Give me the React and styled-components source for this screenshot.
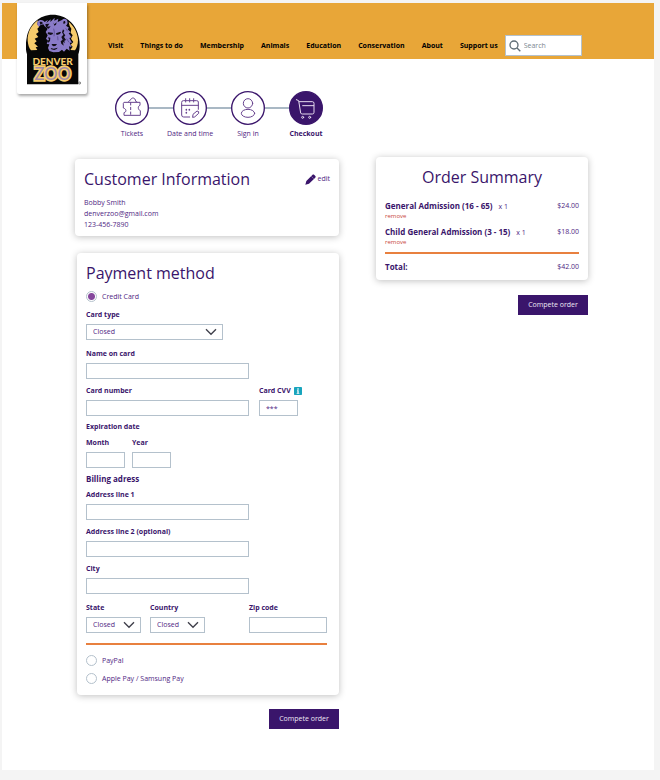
import React, { useState } from "react";
import styled, { createGlobalStyle } from "styled-components";

const purple = "#3a156b";
const textPurple = "#4f2683";
const border = "#b4c1cc";
const gold = "#e8a638";
const orange = "#e8803f";

const GlobalStyle = createGlobalStyle`
* {
	box-sizing: border-box;
}
body {
	margin: 0;
	padding: 3px 6px 10px 2px;
	background: #f4f4f4;
	color: ${textPurple};
	font-family: "Open Sans", sans-serif;
	font-size: 7px;
	line-height: 10px;
}
input, select, button {
	font: inherit;
	color: inherit;
}
a {
	color: inherit;
	text-decoration: none;
}
h1, h2, h3, p, ol {
	margin: 0;
	padding: 0;
}
`

const Page = styled.div`
background: white;
padding-bottom: 41px;
`

const Header = styled.header`
position: relative;
display: flex;
align-items: flex-end;
height: 56px;
padding: 0 72px 3px 106px;
background: ${gold};
`

const LogoCard = styled.a`
position: absolute;
top: 0;
left: 15px;
padding: 11px 6px 9px 9px;
background: white;
border-radius: 0 0 2px 2px;
box-shadow: 1px 2px 3px rgba(0, 0, 0, 0.35);

svg {
	display: block;
}
`

const Nav = styled.nav`
display: flex;
align-items: center;
gap: 17px;
height: 21px;
color: black;
font-weight: 700;
white-space: nowrap;
`

const SearchBox = styled.label`
display: flex;
align-items: center;
gap: 3px;
width: 77px;
height: 21px;
margin-left: 7px;
padding: 0 3px;
background: white;
border: 1px solid ${border};

svg {
	flex: none;
}
input {
	width: 100%;
	min-width: 0;
	padding: 0;
	border: 0;
	outline: 0;
	background: none;
}
input::placeholder {
	color: #7c8790;
	opacity: 1;
}
`

const Steps = styled.ol`
display: flex;
padding: 32px 0 18px 101px;
list-style: none;
`

const Step = styled.li`
display: flex;
flex-direction: column;
align-items: center;
gap: 4px;
width: 58px;
white-space: nowrap;
color: ${props => (props.$active ? purple : textPurple)};
font-weight: ${props => (props.$active ? 700 : 400)};
`

const Track = styled.div`
display: flex;
align-items: center;
width: 100%;

svg {
	display: block;
}
`

const Line = styled.span`
flex: 1;
height: 2px;
background: ${props => (props.$hidden ? "transparent" : "#a9b8c4")};
`

const Main = styled.main`
display: grid;
grid-template-columns: 264fr 212fr;
column-gap: 37px;
align-items: start;
padding: 0 66px 0 73px;
`

const Column = styled.div`
display: flex;
flex-direction: column;
padding-top: ${props => props.$top || "0"};
`

const Card = styled.section`
padding: ${props => props.$pad || "8px 9px"};
background: white;
border-radius: 4px;
box-shadow: 0 1px 7px rgba(0, 0, 0, 0.25);
`

const Title = styled.h2`
color: ${purple};
font-size: 16px;
line-height: 24px;
font-weight: 400;
text-align: ${props => props.$align || "left"};
`

const CardHead = styled.div`
display: flex;
align-items: center;
justify-content: space-between;
margin-bottom: 6px;
`

const EditLink = styled.a`
display: flex;
align-items: center;
gap: 2px;
`

const Contact = styled.p`
line-height: 11px;
`

const Form = styled.form`
display: flex;
flex-direction: column;
padding-top: 17px;
padding-left: 2px;
`

const RadioRow = styled.label`
display: flex;
align-items: center;
gap: 5px;
height: 11px;
margin: ${props => props.$margin || "0"};
`

const Radio = styled.input`
appearance: none;
width: 11px;
height: 11px;
margin: 0;
border: 1px solid ${border};
border-radius: 50%;

&:checked {
	background: radial-gradient(circle, #85479c 3px, white 4px);
}
`

const Row = styled.div`
display: flex;
align-items: flex-end;
gap: ${props => props.$gap || "10px"};
margin-top: ${props => props.$top || "7px"};
`

const Field = styled.div`
display: flex;
flex-direction: column;
gap: 4px;
width: ${props => props.$width || "163px"};
margin-left: ${props => (props.$end ? "auto" : "0")};
`

const Label = styled.label`
display: flex;
align-items: center;
gap: 3px;
height: 10px;
color: ${purple};
font-weight: 700;
white-space: nowrap;

svg {
	flex: none;
}
`

const GroupTitle = styled.h3`
margin-top: 6px;
color: ${purple};
font-size: ${props => (props.$large ? "8px" : "7px")};
font-weight: 700;
`

const Input = styled.input`
width: 100%;
height: 16px;
padding: 0 6px;
background: white;
border: 1px solid ${border};
border-radius: 0;

&::placeholder {
	color: ${textPurple};
	opacity: 1;
}
`

const SelectWrap = styled.div`
position: relative;

svg {
	position: absolute;
	top: 4px;
	right: 6px;
	pointer-events: none;
}
`

const Select = styled.select`
appearance: none;
display: block;
width: 100%;
height: 16px;
padding: 0 6px;
background: white;
border: 1px solid ${border};
border-radius: 0;
`

const Divider = styled.hr`
width: 100%;
height: 2px;
margin: ${props => props.$margin};
border: 0;
background: ${orange};
`

const OrderButton = styled.button`
align-self: flex-end;
width: 70px;
height: 20px;
margin-top: ${props => props.$top};
padding: 0;
border: 0;
background: ${purple};
color: #eee8f4;
cursor: pointer;
`

const Item = styled.div`
display: flex;
justify-content: space-between;
margin-top: ${props => props.$top || "0"};
`

const ItemName = styled.strong`
margin-right: 6px;
color: ${purple};
font-size: 8px;
font-weight: 700;
`

const Remove = styled.button`
display: block;
padding: 0;
border: 0;
background: none;
color: #c8483c;
font-size: 6px;
line-height: 8px;
cursor: pointer;
`

const Logo = () => (
	<svg width="55" height="71" viewBox="78 42 165 213" role="img" aria-label="Denver Zoo">
		<path d="M81 253V163C76 148 77 128 80 114C87 72 119 44 158 44C198 44 230 72 237 114C240 130 240 148 235 163V253Z" fill="#070707" />
		<g transform="translate(72 36)">
			<path d="M42 25C22 38 10 62 11 86C12 98 15 108 21 115L40 114L35 106L42 104L31 94L38 88L32 80L43 75L36 66L44 60L40 50L46 44L40 37Z" fill="#f7cc6c" />
			<path d="M134 29C150 42 161 62 162 84C162 98 158 108 153 115L139 114L146 104L140 98L148 90L141 80L146 70L140 62L142 50L137 42Z" fill="#f7cc6c" />
			<path d="M44 44C38 38 38 28 46 25C52 22 59 25 62 30L72 23L67 33L80 22L79 30L92 17L91 26L103 20L101 30L114 24C119 18 128 20 130 27C132 34 130 38 126 41L135 47L131 52L140 61L134 64L143 76L136 78L144 92L137 92L143 106L135 103L137 116L128 110L120 119L114 113L105 120L88 121L76 117L72 108L76 97L68 96L72 86L66 80L71 70L65 60L71 50L62 43L58 37L50 39Z" fill="#8a7bc8" />
			<g fill="#120f18">
				<path d="M47 31C50 28 55 30 57 34L49 38ZM118 29C120 25 125 27 124 32C123 35 119 36 118 35Z" />
				<path d="M64 36L76 35L70 44L80 43L74 50L66 46ZM88 31L91 37L98 31L96 38L91 41Z" />
				<path d="M72 61L86 62L87 66L80 69L71 66ZM96 64L109 59L111 62L106 67L98 69Z" />
				<path d="M72 76L79 77L78 87L73 92L70 88L75 83Z" />
				<path d="M83 96L99 96L95 101L89 103L84 100ZM80 108L89 110L101 107L98 111L91 114L82 112Z" />
				<path d="M117 52L121 56L118 62L124 70L120 75L126 84L121 86L122 94L117 89L119 101L112 95L110 88L116 83L112 75L118 68L114 61Z" />
			</g>
			<path d="M89 50L91 60L90 73M101 73L102 85M125 49L131 58M128 80L135 91" fill="none" stroke="#4f4382" strokeWidth="2" />
		</g>
		<text x="158" y="194" textAnchor="middle" fontFamily="Lato, sans-serif" fontWeight="900" fontSize="30" fill="#f7cc6c">DENVER</text>
		<text x="158" y="239" textAnchor="middle" fontFamily="Lato, sans-serif" fontWeight="400" fontSize="50" fill="#a08aa8" stroke="#f7cc6c" strokeWidth="10" paintOrder="stroke">ZOO</text>
		<circle cx="239" cy="249" r="3" fill="none" stroke="#444" strokeWidth="2" />
	</svg>
);

const SearchIcon = () => (
	<svg width="12" height="12" viewBox="0 0 36 36" fill="none" stroke="#5f6d76" strokeWidth="4">
		<circle cx="15" cy="15" r="12" />
		<path d="M24 24L34 34" />
	</svg>
);

const StepIcon = ({ active, children }) => (
	<svg width="34" height="34" viewBox="0 0 102 102" fill="none">
		<circle cx="51" cy="51" r="49" fill={active ? purple : "white"} stroke={purple} strokeWidth="4" />
		<g stroke={active ? "#e6dcef" : "#68438f"} strokeWidth="3" strokeLinecap="round" strokeLinejoin="round">
			{children}
		</g>
	</svg>
);

const Chevron = () => (
	<svg width="12" height="8" viewBox="0 0 36 24" fill="none" stroke="#3f3f4a" strokeWidth="4">
		<path d="M3 4L18 19L33 4" />
	</svg>
);

const Pencil = () => (
	<svg width="11" height="11" viewBox="0 0 33 33" fill={purple}>
		<path d="M1 32L4 21L22 3C24 1 26 1 28 3L31 6C33 8 32 10 30 12L12 29Z" />
		<path d="M19 7L26 14" stroke="white" strokeWidth="1" />
	</svg>
);

const InfoIcon = () => (
	<svg width="8" height="8" viewBox="0 0 24 24">
		<rect width="24" height="24" rx="2" fill="#18a5bd" />
		<path d="M10 4H14V8H10ZM9 10H14V18H16V20H8V18H10V12H9Z" fill="white" />
	</svg>
);

const steps = [
	{
		name: "Tickets",
		icon: (
			<>
				<path d="M28 34H75V43C68 45 68 56 76 59V73H27V65C35 63 35 54 25 51V38Z" />
				<path d="M41 32C45 31 47 22 53 21C58 20 62 26 62 31L66 33" />
				<path d="M47 35V72" strokeDasharray="7 7" />
			</>
		),
	},
	{
		name: "Date and time",
		icon: (
			<>
				<path d="M76 55V33Q76 29 71 29H31Q26 29 26 34V72Q26 78 32 78H50M26 43H76M38 23V33M50 23V33M62 23V33" />
				<path d="M40 56V57M49 56V57M40 65V66" strokeWidth="5" />
				<path d="M59 78L60 70L72 60Q79 60 77 67L66 77Z" />
			</>
		),
	},
	{
		name: "Sign in",
		icon: (
			<>
				<circle cx="51" cy="37" r="14" />
				<ellipse cx="51" cy="67" rx="20" ry="12" />
			</>
		),
	},
	{
		name: "Checkout",
		icon: (
			<>
				<path d="M22 26L29 29L35 66Q36 69 40 69H70Q75 69 75 64V37Q75 32 70 32H31M41 44H74" />
				<circle cx="41" cy="79" r="3" />
				<circle cx="62" cy="79" r="3" />
			</>
		),
	},
];

const links = ["Visit", "Things to do", "Membership", "Animals", "Education", "Conservation", "About", "Support us"];

const items = [
	{ name: "General Admission (16 - 65)", count: 1, price: "$24.00" },
	{ name: "Child General Admission (3 - 15)", count: 1, price: "$18.00" },
];

const TextField = ({ id, label, width, end, placeholder, info }) => (
	<Field $width={width} $end={end}>
		<Label htmlFor={id}>
			{label}
			{info && <InfoIcon />}
		</Label>
		<Input id={id} name={id} placeholder={placeholder} />
	</Field>
);

const SelectField = ({ id, label, width }) => (
	<Field $width={width}>
		<Label htmlFor={id}>{label}</Label>
		<SelectWrap>
			<Select id={id} name={id}>
				<option>Closed</option>
			</Select>
			<Chevron />
		</SelectWrap>
	</Field>
);

export default function App() {
	const [method, setMethod] = useState("card");

	const radio = value => ({
		type: "radio",
		name: "method",
		checked: method === value,
		onChange: () => setMethod(value),
	});

	return (
		<Page>
			<GlobalStyle />
			<Header>
				<LogoCard href="#home">
					<Logo />
				</LogoCard>
				<Nav>
					{links.map(link => (
						<a key={link} href="#nav">{link}</a>
					))}
				</Nav>
				<SearchBox>
					<SearchIcon />
					<input type="text" placeholder="Search" aria-label="Search" />
				</SearchBox>
			</Header>
			<Steps>
				{steps.map((step, i) => (
					<Step key={step.name} $active={i === steps.length - 1}>
						<Track>
							<Line $hidden={i === 0} />
							<StepIcon active={i === steps.length - 1}>{step.icon}</StepIcon>
							<Line $hidden={i === steps.length - 1} />
						</Track>
						{step.name}
					</Step>
				))}
			</Steps>
			<Main>
				<Column $top="2px">
					<Card $pad="8px 9px 6px">
						<CardHead>
							<Title>Customer Information</Title>
							<EditLink href="#edit"><Pencil />edit</EditLink>
						</CardHead>
						<Contact>Bobby Smith</Contact>
						<Contact>denverzoo@gmail.com</Contact>
						<Contact>123-456-7890</Contact>
					</Card>
					<Form onSubmit={e => e.preventDefault()}>
						<Card $pad="8px 12px 11px 9px">
							<Title>Payment method</Title>
							<RadioRow $margin="6px 0 0">
								<Radio {...radio("card")} />
								Credit Card
							</RadioRow>
							<Row $top="8px">
								<SelectField id="type" label="Card type" width="137px" />
							</Row>
							<Row $top="9px">
								<TextField id="name" label="Name on card" />
							</Row>
							<Row>
								<TextField id="number" label="Card number" />
								<TextField id="cvv" label="Card CVV" width="39px" placeholder="***" info />
							</Row>
							<GroupTitle>Expiration date</GroupTitle>
							<Row $top="6px" $gap="7px">
								<TextField id="month" label="Month" width="39px" />
								<TextField id="year" label="Year" width="39px" />
							</Row>
							<GroupTitle $large>Billing adress</GroupTitle>
							<Row $top="6px">
								<TextField id="address1" label="Address line 1" />
							</Row>
							<Row>
								<TextField id="address2" label="Address line 2 (optional)" />
							</Row>
							<Row>
								<TextField id="city" label="City" />
							</Row>
							<Row $top="9px" $gap="9px">
								<SelectField id="state" label="State" width="55px" />
								<SelectField id="country" label="Country" width="55px" />
								<TextField id="zip" label="Zip code" width="78px" end />
							</Row>
							<Divider $margin="10px 0" />
							<RadioRow>
								<Radio {...radio("paypal")} />
								PayPal
							</RadioRow>
							<RadioRow $margin="7px 0 0">
								<Radio {...radio("phone")} />
								Apple Pay / Samsung Pay
							</RadioRow>
						</Card>
						<OrderButton $top="14px">Compete order</OrderButton>
					</Form>
				</Column>
				<Column>
					<Card>
						<Title $align="center">Order Summary</Title>
						{items.map((item, i) => (
							<div key={item.name}>
								<Item $top={i === 0 ? "12px" : "7px"}>
									<span><ItemName>{item.name}</ItemName>x {item.count}</span>
									<span>{item.price}</span>
								</Item>
								<Remove type="button">remove</Remove>
							</div>
						))}
						<Divider $margin="6px 0 8px" />
						<Item>
							<ItemName>Total:</ItemName>
							<span>$42.00</span>
						</Item>
					</Card>
					<OrderButton $top="15px">Compete order</OrderButton>
				</Column>
			</Main>
		</Page>
	);
}
